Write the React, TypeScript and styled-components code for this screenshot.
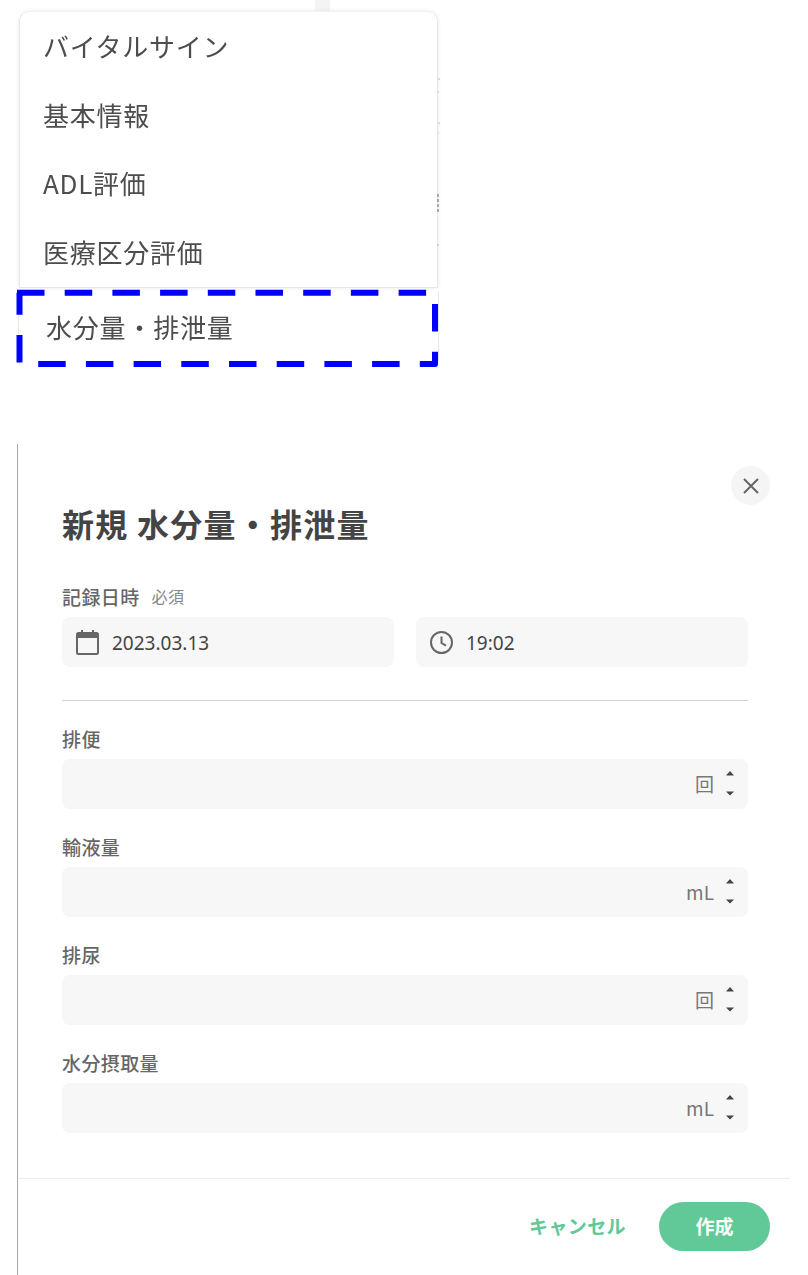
import React from "react";
import styled, { createGlobalStyle } from "styled-components";

const Global = createGlobalStyle`
  html, body { margin: 0; padding: 0; background: #fff; }
  body { font-family: "Noto Sans CJK JP", "Noto Sans", sans-serif; color: #444; }
  * { box-sizing: border-box; }
`;

const Page = styled.div`
  width: 808px;
  height: 1275px;
  overflow: hidden;
  background: #fff;
`;

const TopArea = styled.section`
  height: 444px;
  padding-left: 19px;
`;

const BackStrip = styled.div`
  width: 15px;
  height: 11px;
  margin-left: 296px;
  background: #f4f4f4;
`;

const MenuCard = styled.div`
  position: relative;
  width: 419px;
  height: 277px;
  background: #fff;
  border-radius: 10px 10px 0 0;
  border: 1px solid #e6e6e6;
  border-top-color: #f2f2f2;
  box-shadow: 0 0 4px rgba(0, 0, 0, 0.08);
  padding: 0 0 0 23px;
  filter: blur(0.35px);
`;

const PeekMarks = styled.svg`
  position: absolute;
  left: 417px;
  top: 60px;
  width: 4px;
  height: 180px;
`;

const MenuItem = styled.div`
  height: 68.5px;
  display: flex;
  align-items: center;
  font-size: 26px;
  letter-spacing: 0.75px;
  color: #4d4d4d;
  line-height: 1;
`;

const FocusRow = styled.div`
  position: relative;
  width: 421px;
  height: 75px;
  margin: 3px 0 0 -1px;
  padding: 0 0 3px 27px;
  display: flex;
  align-items: center;
  border: solid #e8e8e8;
  border-width: 0 1px;
  border-radius: 0 0 6px 6px;
  font-size: 26px;
  letter-spacing: 0.8px;
  color: #4d4d4d;
  line-height: 1;
  filter: blur(0.35px);
`;

const DashOverlay = styled.svg`
  position: absolute;
  left: -2px;
  top: 1px;
  width: 430px;
  height: 85px;
  overflow: visible;
`;

const Drawer = styled.section`
  position: relative;
  width: 773px;
  height: 831px;
  margin-left: 17px;
  border-left: 1px solid #a8a8a8;
  display: flex;
  flex-direction: column;
`;

const CloseButton = styled.button`
  position: absolute;
  top: 22px;
  right: 20px;
  width: 39px;
  height: 39px;
  padding: 0;
  border: 0;
  border-radius: 50%;
  background: #f5f5f5;
  color: #666;
  display: flex;
  align-items: center;
  justify-content: center;
`;

const Body = styled.div`
  flex: 1;
  padding: 57px 42px 0 44px;
`;

const Title = styled.h1`
  margin: 0;
  font-size: 32px;
  line-height: 44px;
  font-weight: 700;
  letter-spacing: 1.25px;
  color: #444;
`;

const Label = styled.div`
  display: flex;
  align-items: center;
  gap: 12px;
  height: 26px;
  padding-bottom: 2px;
  font-size: 19px;
  font-weight: 500;
  letter-spacing: 0.4px;
  color: #666;
`;

const Required = styled.span`
  font-size: 16px;
  font-weight: 400;
  letter-spacing: 0.5px;
  color: #888;
`;

const DateLabel = styled(Label)`
  margin-top: 39px;
`;

const DateRow = styled.div`
  display: grid;
  grid-template-columns: 332px 332px;
  gap: 22px;
  margin-top: 7px;
`;

const Field = styled.div`
  height: 50px;
  border-radius: 8px;
  background: #f7f7f7;
  display: flex;
  align-items: center;
`;

const DateField = styled(Field)`
  padding: 1px 0 0 13px;
  gap: 12px;
  font-family: "Noto Sans", "Noto Sans CJK JP", sans-serif;
  font-size: 19px;
  color: #444;
`;

const Divider = styled.hr`
  height: 1px;
  margin: 33px 0 25px;
  border: 0;
  background: #d4d4d4;
`;

const NumberBlock = styled.div`
  margin-bottom: 25px;
`;

const NumberField = styled(Field)`
  margin-top: 7px;
  justify-content: flex-end;
  padding-right: 12px;
  gap: 10px;
`;

const Unit = styled.span`
  padding-bottom: 2px;
  font-size: 19px;
  color: #777;
`;

const Spinner = styled.svg`
  width: 12px;
  height: 32px;
  color: #444;
`;

const Footer = styled.footer`
  height: 97px;
  border-top: 1px solid #ededed;
  padding: 23px 20px 0 0;
  display: flex;
  justify-content: flex-end;
  gap: 33px;
`;

const CancelButton = styled.button`
  height: 49px;
  padding: 0 0 3px;
  border: 0;
  background: none;
  font-family: inherit;
  font-size: 19px;
  font-weight: 700;
  letter-spacing: 0.4px;
  color: #60c997;
`;

const CreateButton = styled.button`
  width: 111px;
  height: 49px;
  padding: 0 0 3px;
  border: 0;
  border-radius: 25px;
  background: #60c997;
  font-family: inherit;
  font-size: 19px;
  font-weight: 700;
  color: #fff;
`;

const menu = ["バイタルサイン", "基本情報", "ADL評価", "医療区分評価"];
const fields = [
  { label: "排便", unit: "回" },
  { label: "輸液量", unit: "mL" },
  { label: "排尿", unit: "回" },
  { label: "水分摂取量", unit: "mL" },
];

const SpinnerIcon = () => (
  <Spinner viewBox="0 0 12 32" aria-hidden="true">
    <path d="M6 3 10 7.5H2Z" fill="currentColor" />
    <path d="M6 27.5 10 23.5H2Z" fill="currentColor" />
  </Spinner>
);

export default function App() {
  return (
    <Page>
      <Global />
      <TopArea>
        <BackStrip />
        <MenuCard>
          {menu.map((m) => (
            <MenuItem key={m}>{m}</MenuItem>
          ))}
          <PeekMarks viewBox="0 0 4 180" aria-hidden="true">
            <path d="M1 7h2M1 20h1M1 51h2M1 61h1" stroke="#e2b98a" />
            <path d="M1 122v18" stroke="#666" strokeDasharray="3 2" />
            <path d="M1 172v2" stroke="#7fcfa8" />
          </PeekMarks>
        </MenuCard>
        <FocusRow>
          水分量・排泄量
          <DashOverlay viewBox="0 0 430 85" aria-hidden="true">
            <path
              d="M0 0.7H418V72H2.5V0.7"
              fill="none"
              stroke="#0000ff"
              strokeWidth="6"
              strokeLinejoin="round"
              strokeDasharray="27.5 20.2"
            />
          </DashOverlay>
        </FocusRow>
      </TopArea>
      <Drawer>
        <CloseButton aria-label="close">
          <svg width="18" height="18" viewBox="0 0 18 18" fill="none" stroke="currentColor" strokeWidth="2">
            <path d="M2 2 16 16M16 2 2 16" />
          </svg>
        </CloseButton>
        <Body>
          <Title>新規 水分量・排泄量</Title>
          <DateLabel>
            記録日時<Required>必須</Required>
          </DateLabel>
          <DateRow>
            <DateField>
              <svg width="25" height="27" viewBox="0 0 25 27" fill="none">
                <rect x="2" y="4" width="21" height="21" rx="1.5" stroke="#666" strokeWidth="2" />
                <path d="M2 4.5h21V9H2Z" fill="#666" />
                <path d="M7 1v4M18 1v4" stroke="#666" strokeWidth="2" />
              </svg>
              2023.03.13
            </DateField>
            <DateField>
              <svg width="25" height="25" viewBox="0 0 25 25" fill="none" stroke="#666" strokeWidth="2">
                <circle cx="12.5" cy="12.5" r="10.5" />
                <path d="M12.5 6.5v6.5l4.5 2.7" />
              </svg>
              19:02
            </DateField>
          </DateRow>
          <Divider />
          {fields.map((f) => (
            <NumberBlock key={f.label}>
              <Label>{f.label}</Label>
              <NumberField>
                <Unit>{f.unit}</Unit>
                <SpinnerIcon />
              </NumberField>
            </NumberBlock>
          ))}
        </Body>
        <Footer>
          <CancelButton>キャンセル</CancelButton>
          <CreateButton>作成</CreateButton>
        </Footer>
      </Drawer>
    </Page>
  );
}
